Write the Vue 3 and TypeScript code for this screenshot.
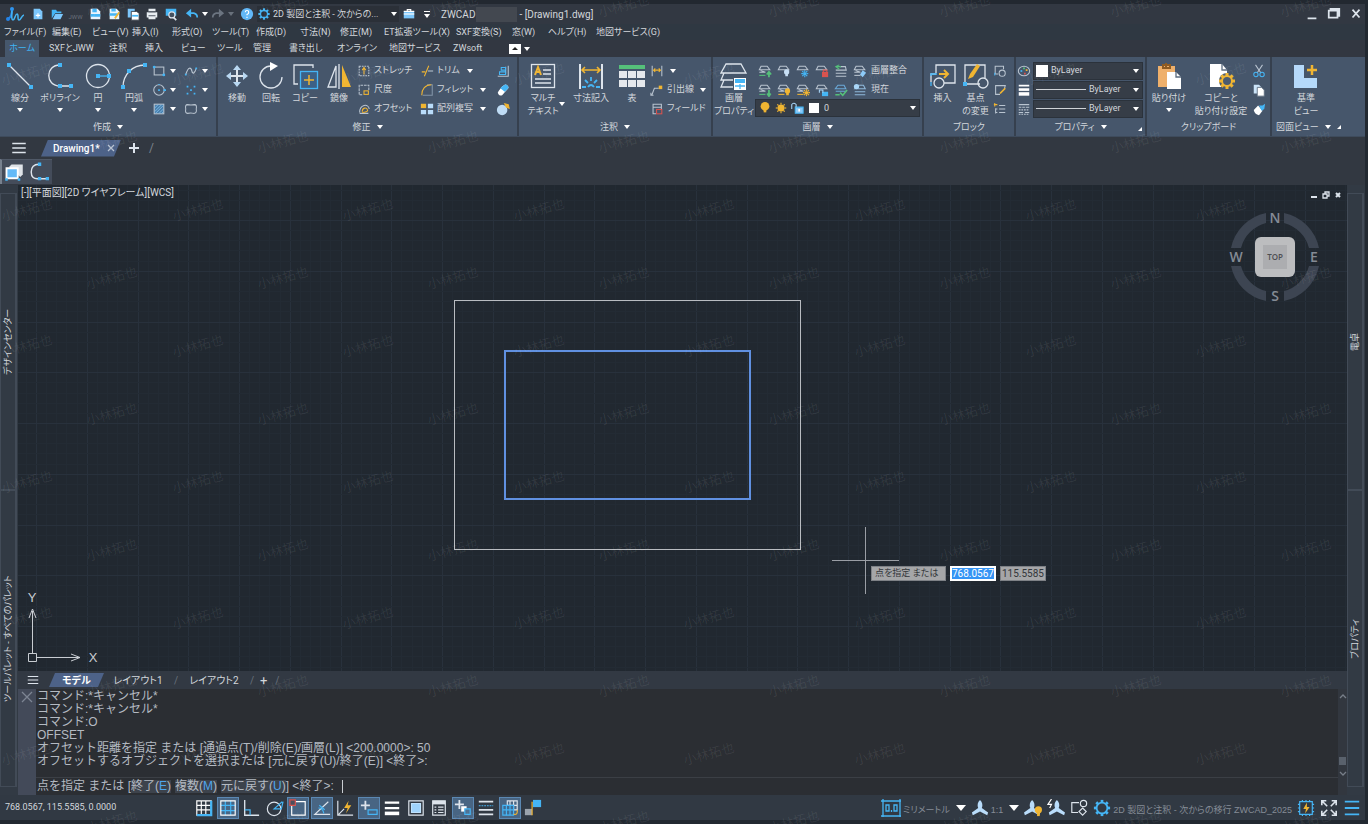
<script setup lang="ts">
interface Tool { icon: string; label: string; w: number; caret?: boolean; side?: boolean }
interface Mini { icon: string; label: string; text?: boolean; caret?: boolean }

const W = '#dde4ec'
const B = '#45b5f5'
const Y = '#f0b532'
const G = '#55c07a'
const R = '#d9534f'

const dot = (x: number, y: number) => `<rect x="${x - 2}" y="${y - 2}" width="4" height="4" fill="${B}" stroke="none"/>`
const roof = '<path d="M3.5 2.5h7l3 4h-12z"/>'
const layer = (accent = '#b9c4d0') => `${roof}<path d="M1.5 9.5h7l-5.500-2"/><path d="M1.5 13h7" stroke="${accent}"/>`
const bulb = (x: number, y: number, c: string, r = 3) => `<circle cx="${x}" cy="${y}" r="${r}" fill="${c}" stroke="none"/><path d="M${x} ${y}v${r + 2}" stroke="${c}" stroke-width="3"/>`
const sun = (x: number, y: number, c: string, r = 3) => {
  let rays = ''
  for (let a = 0; a < 360; a += 45) rays += `<path d="M0 ${-r}v-2" transform="translate(${x} ${y}) rotate(${a})" stroke="${c}" stroke-width="1.3"/>`
  return `<circle cx="${x}" cy="${y}" r="${r}" fill="${c}" stroke="none"/>${rays}`
}
const gear = (x: number, y: number, r: number, c: string, sw: number) => {
  let teeth = ''
  for (let a = 0; a < 360; a += 45) teeth += `<path d="M0 ${-r}v${-sw - 1}" transform="translate(${x} ${y}) rotate(${a})" stroke="${c}" stroke-width="${sw + 1}"/>`
  return `<circle cx="${x}" cy="${y}" r="${r}" stroke="${c}" stroke-width="${sw}"/>${teeth}`
}

const icons: Record<string, string> = {
  line: `<path d="M3 3l22 22"/>${dot(3, 3)}${dot(25, 25)}`,
  poly: `<path d="M14 3C-1 3-1 24 14 24h11"/>${dot(14, 3)}${dot(14, 24)}${dot(25, 24)}`,
  circle: `<circle cx="14" cy="14" r="11.5"/><path d="M14 14h11" stroke="${B}"/>${dot(14, 14)}${dot(25, 14)}`,
  arc: `<path d="M3 25C3 13 12 3 25 3"/>${dot(3, 25)}${dot(9, 9)}${dot(25, 3)}`,
  rect: `<rect x="2.5" y="3.5" width="11" height="9"/><circle cx="2.5" cy="3.5" r="1" fill="${B}" stroke="${B}"/><circle cx="13.5" cy="12.5" r="1" fill="${B}" stroke="${B}"/>`,
  ellipse: `<circle cx="8" cy="8" r="6"/><path d="M7 8h2M13 8h3M8 1v1" stroke="${B}" stroke-width="2"/>`,
  hatch: `<rect x="2.5" y="2.5" width="11" height="11" fill="#4a80ad"/><path d="M3 7l4-4M3 11l8-8M4 13l9-9M8 13l5-5M11 13l2-2" stroke="#7fb9e6" stroke-width="1"/>`,
  spline: `<path d="M2 12C5 2 8 4 9 8s3 3 5-3"/><path d="M1 12h2M13 5h2" stroke="${B}" stroke-width="2"/>`,
  points: `<path d="M3 4h2M11 4h2M7 8h2M3 12h2M11 12h2" stroke="${B}" stroke-width="2"/>`,
  cloud: `<path d="M4 3q4 1 8 0 3 0 2 5 1 5-3 5-3-1-7 0-3 0-2-5-1-5 2-5z"/>`,
  move: `<path d="M14 5v18M5 14h18" stroke-width="2"/><path d="M14 3l-4 5h8zM14 25l-4-5h8zM3 14l5-4v8zM25 14l-5-4v8z" fill="#b9d8f2" stroke="none"/>`,
  rotate: `<path d="M14 4a11 11 0 1 0 11 11"/><path d="M13 0l8 4-8 5z" fill="#fff" stroke="none"/>`,
  copy: `<path d="M22 6V3H3v19h4"/><rect x="9.5" y="9.5" width="17" height="17" stroke="${B}" fill="#3d6186"/><path d="M18 13v10M13 18h10" stroke="${Y}" stroke-width="1.5"/>`,
  mirror: `<path d="M11 4v21H3zM14 2v25"/><path d="M17 3v22h9z" fill="${Y}" stroke="none"/>`,
  stretch: `<rect x="2.5" y="2.5" width="11" height="11" stroke-dasharray="2 1"/><path d="M8 12V5M6 7l2-3 2 3" stroke="${Y}"/>`,
  scale: `<path d="M13.5 8V2.5h-11v11H6" stroke-dasharray="3 1"/><rect x="8" y="9" width="5" height="4" stroke="${Y}"/>`,
  offset: `<path d="M3 13h10M3 12C3 3 13 1 14 8"/><path d="M6 11c0-5 5-5 6-2 1 2-3 3-6 3" stroke="${Y}"/>`,
  trim: `<path d="M9 8h6"/><path d="M2 9h4M5 14l5-12" stroke="${Y}"/>`,
  fillet: `<path d="M3 14h11V2H8" stroke="#8294a8"/><path d="M2 14C2 7 6 2 13 2" stroke="${Y}"/>`,
  array: `<g stroke="none"><path d="M1 2h6v5H1z" fill="${Y}"/><path d="M9 2h6v5H9zM1 9h6v5H1zM9 9h6v5H9z" fill="#b9dcfa"/></g>`,
  align: `<path d="M14 2v12H2M11 3v8"/><path d="M4 9h7v3H4zM6 4h5v3H6z" stroke="${B}"/>`,
  erase: `<path d="M7 4l3-2q2-1 4 2 1 2-1 3l-6 7q-3 1-4-1-2-2 0-4z" fill="#fff" stroke="none"/><path d="M7 4l3-2q2-1 4 2 1 2-1 3l-3 3-5-4z" fill="${B}" stroke="none"/>`,
  explode: `<circle cx="7" cy="9" r="6" fill="#bfdcf5" stroke="none"/><path d="M10 2l4 1 1 4-3-1z" fill="${Y}" stroke="${Y}"/>`,
  mtext: `<rect x="2.5" y="2.5" width="23" height="23"/><path d="M6 13l3-8 3 8M7 10h4" stroke="${Y}" stroke-width="2"/><path d="M14 8h8M14 12h8M6 17h16M6 21h16" stroke-width="1.5"/>`,
  dim: `<path d="M3 2v25M25 2v25" stroke-width="2"/><path d="M5 8h18M8 5L5 8l3 3M20 5l3 3-3 3" stroke="${Y}" stroke-width="1.6"/><path d="M14 15v4M8 18l3 3M20 18l-3 3M5 25h4M23 25h-4M11 25q3-4 6 0" stroke="${B}" stroke-width="1.8"/>`,
  table: `<g stroke="none"><path d="M1 3h26v4H1z" fill="${G}"/><path d="M1 9h8v7H1zM10 9h8v7h-8zM19 9h8v7h-8zM1 18h8v7H1zM10 18h8v7h-8zM19 18h8v7h-8z" fill="#e5e8ec"/></g>`,
  linear: `<path d="M2.5 2v12M13.5 2v12"/><path d="M4 7h8M6 5L4 7l2 2M10 5l2 2-2 2" stroke="${Y}"/>`,
  leader: `<path d="M2 14l3-8h5M1 11v3h3"/><rect x="10" y="3" width="4" height="4" fill="${Y}" stroke="none"/>`,
  field: `<path d="M13 8V2.5H3.5v11H7M3 6h10"/><rect x="7.5" y="8.5" width="6" height="5" stroke="${R}"/>`,
  layers: `<path d="M6 2h15l5 9H1z"/><path d="M4 11l-3 7h12M4 18l-3 7h12"/><rect x="14" y="16" width="12" height="12" fill="#fff" stroke="none"/><path d="M15 17h10v4H15z" fill="${B}" stroke="none"/><path d="M15 24h10M20 22v5" stroke="${B}"/>`,
  l1: layer(G) + `<path d="M12.5 15V9M10 12l2.5-3 2.5 3" stroke="${G}" stroke-width="2"/>`,
  l2: roof + bulb(11, 9, '#c7dff5'),
  l3: roof + sun(10, 11, B, 2),
  l4: roof + `<path d="M8 9h7v6H8z" fill="${R}" stroke="none"/><path d="M9.5 9V7h4v2" stroke="${R}"/>`,
  l5: `<path d="M7 3h6l1 4H2M2 10.5h12M2 14h12"/><path d="M6 1L2 3l4 3M2 3h6" stroke="${G}"/>`,
  l6: layer() + `<path d="M11 7l4 3-4 5-3-3z" fill="#8dcaf7" stroke="none"/>`,
  l7: layer(G) + `<path d="M12.5 8v6M10.5 12l2 3 2-3" stroke="${G}" stroke-width="2"/>`,
  l8: layer(Y) + bulb(12, 9, Y),
  l9: layer(Y) + sun(12, 11, Y, 2),
  l10: roof + `<path d="M8 10h7v5H8z" fill="${B}" stroke="none"/><path d="M5 11V8h4v3" stroke="#a9d6f8"/>`,
  l11: `<path d="M4.5 2.5h7l2 4h-12zM2 9.5h12" stroke="#6ba9d8"/><path d="M1.5 13.5h5M7 11l3 3 5-6" stroke="${G}" stroke-width="1.8"/>`,
  l12: `<path d="M6 2.500h6l2 4H2zM2 10h12M2 13.500h12" stroke="#8fb9dc"/><circle cx="4" cy="4" r="3" fill="#a9d6f8" stroke="none"/>`,
  sunny: sun(8, 8, Y, 4),
  lamp: bulb(8, 6, Y, 5),
  unlock: `<path d="M6 7h9v7H6z" fill="#8dcaf7" stroke="${B}"/><path d="M2 9V4q2-3 5 0v3" stroke="#a9d6f8"/><path d="M10.5 9v3" stroke="#fff" stroke-width="2"/>`,
  insert: `<path d="M7 11V3h19v18H15M2 20v-8h5"/><path d="M2 20v4M2 14v-2h6" stroke="${B}"/><circle cx="10" cy="21" r="5"/><path d="M10 12h9M15 8l4 4-4 4" stroke="${Y}" stroke-width="2"/>`,
  base: `<path d="M18 22H3V3h20v13"/><circle cx="21" cy="21" r="5"/><path d="M6 17l2-5 7-10 3 2-7 11z" fill="${Y}" stroke="none"/>${dot(3, 22)}`,
  b1: `<path d="M12 6V2.5H2.5v9H6"/><circle cx="10.5" cy="10.5" r="3.5"/><path d="M2 13v-3" stroke="${B}"/>`,
  b2: `<path d="M13 7L14 3H3v10h5"/><path d="M8 12l6-6" stroke="${Y}" stroke-width="2"/>`,
  b3: `<path d="M2 1v4M5 3H1" stroke="${Y}"/><path d="M7 4h7M7 8h7M7 12h7M3 7v6M3 8h2M3 12h2"/>`,
  palette: `<ellipse cx="8" cy="8" rx="6.5" ry="5.5"/><path d="M4 8h2" stroke="${B}" stroke-width="2"/><path d="M7 5h2" stroke="${G}" stroke-width="2"/><path d="M10 7h2" stroke="${Y}" stroke-width="2"/><path d="M8 11h2" stroke="${R}" stroke-width="2"/>`,
  weight: `<g stroke="#fff"><path d="M2 3h12" stroke-width="2"/><path d="M2 7.5h12" stroke-width="3"/><path d="M2 12.5h12" stroke-width="4"/></g>`,
  ltype: `<path d="M2 3h12M2 6h3M6 6h3M10 6h4M2 9h2M5 9h2M8 9h2M11 9h2M2 12h5M9 12h5M2 14h2M5 14h2M8 14h2M11 14h2"/>`,
  paste: `<path d="M3 4h17v21H3z" fill="#efb06b" stroke="none"/><path d="M8 3h7v3H8zM11 1v4" stroke="#8d5b23" stroke-width="2"/><path d="M12 10h9l5 5v12H12z" fill="#fff" stroke="none"/><path d="M21 10v5h5" stroke="#5b6b7e"/>`,
  pasteset: `<path d="M3 2h12l5 6v17H3z" fill="#fff" stroke="none"/><path d="M15 2v6h5" stroke="#5b6b7e"/><circle cx="20" cy="19" r="8" fill="#4b5b70" stroke="none"/>${gear(20, 19, 5, Y, 2)}`,
  cut: `<path d="M4 1l6 9M12 1L6 10"/><circle cx="4.500" cy="12" r="2.500" stroke="${B}"/><circle cx="11.500" cy="12" r="2.500" stroke="${B}"/>`,
  clip: `<path d="M2 2h6l3 3v7H2z" fill="#cbe3f8" stroke="none"/><path d="M6 5h5l3 3v7H6z" fill="#fff" stroke="#5b6b7e" stroke-width="1"/>`,
  brush: `<path d="M2 9l5-5 5 6-4 5q-5-1-6-6z" fill="#fff" stroke="none"/><path d="M8 4h4l3-2-1 6-3 2z" fill="${B}" stroke="none"/>`,
  view: `<path d="M2 3h10v13h13v10H2z" fill="#b5d9fa" stroke="none"/><path d="M20 3v10M15 8h10" stroke="${Y}" stroke-width="2.5"/>`,
  logo: `<path d="M2 13Q6 11 6 3" stroke="#2484e8" stroke-width="2"/><path d="M6 3c0 5-1 11 1 11s2-6 4-6 0 6 2 6 2-4 5-5" stroke="${B}" stroke-width="1.500"/><circle cx="6" cy="3" r="2" fill="#2f95f0" stroke="none"/><circle cx="2" cy="13" r="2" fill="#2484e8" stroke="none"/>`,
  fnew: `<path d="M3 2h7l3 3v9H3z" fill="#7cc6fb" stroke="none"/><path d="M8 7v5M5.5 9.5h5" stroke="#fff"/>`,
  open: `<path d="M2 13V3h5l1 2h5v2H6z" fill="${B}" stroke="none"/><path d="M6 8h9l-3 6H3z" fill="#7cc6fb" stroke="none"/>`,
  save: `<path d="M3 2h8l3 3v9H3z" fill="#eaf4fd" stroke="none"/><path d="M5 2h5v4H5zM3 8h11v3H3z" fill="${B}" stroke="none"/>`,
  saveas: `<path d="M3 2h8l3 3v9H3z" fill="#eaf4fd" stroke="none"/><path d="M5 2h5v3H5zM3 7h9v3H3z" fill="${B}" stroke="none"/><path d="M9 13l5-7" stroke="${Y}" stroke-width="2"/>`,
  saveall: `<path d="M2 2h8v10H2z" fill="#7cc6fb" stroke="none"/><path d="M6 5h6l3 2v8H6z" fill="#fff" stroke="#323842" stroke-width="1"/><path d="M7 9h7v2H7z" fill="${B}" stroke="none"/>`,
  print: `<path d="M4 2h8v3H4zM2 6h12v6H2zM4 10h8v4H4z" fill="#e8edf2" stroke="none"/><path d="M4 10h8M4 5.5h8" stroke="#3b4450" stroke-width="1"/>`,
  preview: `<path d="M2 2h12v8H2z" fill="${B}" stroke="none"/><circle cx="9" cy="9" r="3.5" fill="#43505f"/><path d="M11 12l3 3" stroke-width="2"/>`,
  undo: `<path d="M3 7h7q4 1 4 5" stroke="${B}" stroke-width="2"/><path d="M7 2L1 7l6 5z" fill="${B}" stroke="none"/>`,
  redo: `<path d="M13 7H6q-4 1-4 5" stroke="#6b7480" stroke-width="2"/><path d="M9 2l6 5-6 5z" fill="#6b7480" stroke="none"/>`,
  help: `<circle cx="8" cy="8" r="7" fill="#62b8f8" stroke="none"/><path d="M6 6q0-2 2-2t2 2-2 2.500v1M8 11v1.500" stroke="#fff"/>`,
  gear: gear(8, 8, 4, B, 1.5),
  box: `<path d="M2 5h12v8H2z" fill="#7cc6fb" stroke="none"/><path d="M6 5V3h4v2M2 5h12" stroke="#fff"/><path d="M2 8h12" stroke="#fff"/>`,
  burger: `<path d="M2 4h12M2 8h12M2 12h12"/>`,
  lines3: `<path d="M2 3h16M2 10h16M2 17h16" stroke="${B}" stroke-width="2"/>`,
  rect3d: `<path d="M4 4l2-2h9v8l-2 2z" fill="#dfe3e8" stroke="none"/><path d="M2 5h9v8H2z" fill="#64baf8" stroke="#fff" stroke-width="1.5"/><path d="M1 14h2M11 14h2" stroke="${B}" stroke-width="2"/>`,
  mpoly: `<path d="M9 2Q2 2 2 9t7 6h7"/><path d="M8 2h3M8 15h3M15 15h3" stroke="${B}" stroke-width="3"/>`,
  s1: `<path d="M2 2h16v16H2zM2 7h16M2 12h16M7 2v16M12 2v16" stroke="#fff"/><path d="M18 2v16H2" stroke="${B}" stroke-width="2.5"/>`,
  s2: `<path d="M2 7h16M2 13h16M7 2v16M13 2v16" stroke="${B}"/><path d="M2 2h16v16H2z" stroke="#fff"/>`,
  s3: `<path d="M3 1v17h16" stroke-width="1.5"/><path d="M3 12h6v6" stroke="${B}"/>`,
  s4: `<circle cx="9" cy="11" r="7.5"/><path d="M18 3l-9 8h8l2-8" stroke="${B}"/>`,
  s5: `<path d="M7 3h11v15H3V7" stroke="#fff"/><path d="M1 1h6v6H1z" fill="#4b4e5d" stroke="${R}"/>`,
  s6: `<path d="M17 3L2 17h17"/><path d="M6 10q5 0 6 6M7 7l6 5" stroke="${B}"/>`,
  s7: `<path d="M2 2v16h17M3 17l6-6"/><path d="M14 2l-5 8h4l-2 6 6-9h-4z" fill="${Y}" stroke="none"/>`,
  s8: `<path d="M6 2v10M1 7h10" stroke-width="2"/><path d="M9 12h10v5H9z" stroke="${B}"/>`,
  s9: `<path d="M2 4h16M2 10h16" stroke="#fff" stroke-width="2.5"/><path d="M2 16h16" stroke="#fff" stroke-width="4"/>`,
  s10: `<path d="M2 2h16v16H2z"/><path d="M5 5h10v10H5z" fill="#9fd3fb" stroke="#bfe2fd"/>`,
  s11: `<path d="M3 2h14v16H3z"/><path d="M3 4h14" stroke-width="4"/><path d="M5 9h2M5 12h2M5 15h2M9 9h6M9 12h6M9 15h6"/>`,
  s12: `<path d="M6 1v10M1 6h10" stroke-width="2"/><path d="M8 8h6v6H8z" fill="#fff" stroke="none"/><path d="M12 11h6v6h-6z" fill="#4f7294" stroke="${B}"/>`,
  s13: `<path d="M2 3h16M2 12h16M2 17h16" stroke-width="2"/><path d="M2 7.5h16" stroke="${B}" stroke-dasharray="2 1"/>`,
  s14: `<path d="M7 2h11v10H7zM10 2v10M14 2v10M7 7h11"/><path d="M2 7h12v11H2z" fill="#3e6b93" stroke="${B}"/><path d="M6 7v11M10 7v11M2 12h12" stroke="${B}"/><path d="M14 17q5 1 4-5" stroke="${Y}"/>`,
  s15: `<path d="M10 1h9v8h-9z" fill="${B}" stroke="none"/><path d="M1 11h8v7H1z" fill="#9ba3ac" stroke="none"/><path d="M9 18V3" stroke="${Y}"/>`,
  unit: `<path d="M2 3h17v15H2zM2 1v18M0 3h20M19 1v18M0 18h20" stroke="${B}"/><path d="M5 7h3v6H5zM13 7h3v6h-3z" stroke="${B}"/><path d="M10.500 12v2" stroke="${B}"/>`,
  scaleA: `<path d="M10 1q4 4 2 9l7 5-1 3-8-4-8 4-1-3 7-5Q6 5 10 1z" fill="#b9dcfa" stroke="none"/>`,
  scaleB: `<path d="M9 1q4 4 2 9l7 5-1 3-8-4-8 4-1-3 7-5Q5 5 9 1z" fill="#b9dcfa" stroke="none"/><circle cx="16" cy="12" r="4" fill="${Y}" stroke="none"/><path d="M16 14v5" stroke="${Y}" stroke-width="3"/>`,
  scaleC: `<path d="M11 1q4 4 2 9l7 5-1 3-8-4-8 4-1-3 7-5Q7 5 11 1z" fill="#b9dcfa" stroke="none"/><path d="M5 0L1 6h4L3 10" stroke="#fff"/>`,
  shapes: `<path d="M10 4H2v11h7"/><circle cx="15" cy="5" r="3.5"/><path d="M14 10l4 4-4 4-4-4z"/>`,
  gearL: gear(10, 10, 6, B, 2),
  chip: `<path d="M3 3h14v14H3zM6 1v2M10 1v2M14 1v2M6 17v2M10 17v2M14 17v2M1 6h2M1 10h2M1 14h2M17 6h2M17 10h2M17 14h2" stroke="${B}"/><path d="M11 4l-4 7h3l-1 5 5-7h-3z" fill="${Y}" stroke="none"/>`,
  expand: `<path d="M2 7V2h5M13 2h5v5M18 13v5h-5M7 18H2v-5M2 2l6 6M18 2l-6 6M18 18l-6-6M2 18l6-6" stroke="${W}" stroke-width="1.8"/>`,
}

const quick = [
  ['fnew', '新規'], ['open', '開く'], ['jww', 'JWW'], ['save', '保存'], ['saveas', '名前を付けて保存'],
  ['saveall', 'すべて保存'], ['print', '印刷'], ['preview', 'プレビュー'],
]
const menus: [string, number][] = [
  ['ファイル(F)', 48], ['編集(E)', 40], ['ビュー(V)', 40], ['挿入(I)', 40], ['形式(O)', 40], ['ツール(T)', 44], ['作成(D)', 44],
  ['寸法(N)', 40], ['修正(M)', 44], ['ET拡張ツール(X)', 72], ['SXF変換(S)', 56], ['窓(W)', 36], ['ヘルプ(H)', 48], ['地図サービス(G)', 72],
]
const tabs: [string, number][] = [
  ['SXFとJWW', 60], ['注釈', 36], ['挿入', 36], ['ビュー', 36], ['ツール', 36], ['管理', 36], ['書き出し', 48],
  ['オンライン', 52], ['地図サービス', 64], ['ZWsoft', 56],
]
const create: Tool[] = [
  { icon: 'line', label: '線分', w: 40, caret: true }, { icon: 'poly', label: 'ポリライン', w: 40, caret: true },
  { icon: 'circle', label: '円', w: 36, caret: true }, { icon: 'arc', label: '円弧', w: 36, caret: true },
]
const modify: Tool[] = [
  { icon: 'move', label: '移動', w: 34 }, { icon: 'rotate', label: '回転', w: 34 }, { icon: 'copy', label: 'コピー', w: 34 }, { icon: 'mirror', label: '鏡像', w: 34 },
]
const annotate: Tool[] = [
  { icon: 'mtext', label: 'マルチ\nテキスト', w: 48, side: true }, { icon: 'dim', label: '寸法記入', w: 48 }, { icon: 'table', label: '表', w: 34 },
]
const createCols: Mini[][] = [
  [{ icon: 'rect', label: '長方形', caret: true }, { icon: 'ellipse', label: '楕円', caret: true }, { icon: 'hatch', label: 'ハッチング', caret: true }],
  [{ icon: 'spline', label: 'スプライン', caret: true }, { icon: 'points', label: '点', caret: true }, { icon: 'cloud', label: '雲マーク', caret: true }],
]
const modCols: Mini[][] = [
  [{ icon: 'stretch', label: 'ストレッチ', text: true }, { icon: 'scale', label: '尺度', text: true }, { icon: 'offset', label: 'オフセット', text: true }],
  [{ icon: 'trim', label: 'トリム', text: true, caret: true }, { icon: 'fillet', label: 'フィレット', text: true, caret: true }, { icon: 'array', label: '配列複写', text: true, caret: true }],
  [{ icon: 'align', label: '位置合わせ' }, { icon: 'erase', label: '削除' }, { icon: 'explode', label: '分解' }],
]
const noteCol: Mini[] = [
  { icon: 'linear', label: '長さ寸法', caret: true }, { icon: 'leader', label: '引出線', text: true, caret: true }, { icon: 'field', label: 'フィールド', text: true },
]
const layerRows = [['l1', 'l2', 'l3', 'l4', 'l5', 'l6'], ['l7', 'l8', 'l9', 'l10', 'l11', 'l12']]
const layerText = ['画層整合', '現在']
const propRows: [string, string][] = [['palette', '色'], ['weight', '線の太さ'], ['ltype', '線種']]
const log = [
  'コマンド:*キャンセル*', 'コマンド:*キャンセル*', 'コマンド:O', 'OFFSET',
  'オフセット距離を指定 または [通過点(T)/削除(E)/画層(L)] <200.0000>: 50',
  'オフセットするオブジェクトを選択または [元に戻す(U)/終了(E)] <終了>:',
]
const choices: [string, string][] = [['終了', 'E'], ['複数', 'M'], ['元に戻す', 'U']]
const status = Array.from({ length: 15 }, (_, i) => 's' + (i + 1))
const statusNames = ['グリッド', 'スナップ', '直交', '極', 'オブジェクトスナップ', 'トラック', '動的UCS', '動的入力', '線の太さ', '透過', 'プロパティ', '選択', '線種', '循環', '注釈モニタ']
const active = new Set([1, 4, 5, 7, 11, 13])

const pitch = 50.75
const gridLines = (origin: number, count: number) =>
  Array.from({ length: count }, (_, i) => ({ p: Math.round(origin + ((i - 5) * pitch) / 5) + 0.5, major: i % 5 === 0 }))
const grid = { x: gridLines(18, 260), y: gridLines(35, 160) }

const marks: { x: number; y: number }[] = []
for (let r = 0; r < 13; r++) {
  for (let c = 0; c < 8; c++) marks.push({ x: Math.round((r % 2 ? 3 : 88) + c * 170.6), y: 17 + r * 68 })
}
</script>

<template>
  <div class="app">
    <div class="strip"></div>
    <header class="title">
      <svg class="i18 logo" viewBox="0 0 18 16" v-html="icons.logo"></svg>
      <div class="quick">
        <button v-for="q in quick" :key="q[0]" :aria-label="q[1]">
          <span v-if="q[0] === 'jww'" class="jww">JWW</span>
          <svg v-else class="i14" viewBox="0 0 16 16" v-html="icons[q[0]]"></svg>
        </button>
      </div>
      <button class="hist" aria-label="元に戻す"><svg class="i14" viewBox="0 0 16 16" v-html="icons.undo"></svg><i class="car"></i></button>
      <button class="hist" aria-label="やり直し"><svg class="i14" viewBox="0 0 16 16" v-html="icons.redo"></svg><i class="car dim"></i></button>
      <button class="help" aria-label="ヘルプ"><svg class="i14" viewBox="0 0 16 16" v-html="icons.help"></svg></button>
      <label class="space">
        <svg class="i14" viewBox="0 0 16 16" v-html="icons.gear"></svg>
        <select aria-label="ワークスペース"><option>2D 製図と注釈 - 次からの...</option></select><i class="car"></i>
      </label>
      <button class="help" aria-label="ツールボックス"><svg class="i14" viewBox="0 0 16 16" v-html="icons.box"></svg></button>
      <button class="more" aria-label="カスタマイズ"><i class="over"></i><i class="car"></i></button>
      <span class="name">ZWCAD</span><span class="patch"></span><span>- [Drawing1.dwg]</span>
      <div class="win">
        <button aria-label="最小化"><svg class="i14" viewBox="0 0 16 16"><path d="M3 13h10" stroke-width="2" /></svg></button>
        <button aria-label="元のサイズ"><svg class="i14" viewBox="0 0 16 16"><path d="M2 4h10v8H2zM4 4V2h10v8h-2" stroke-width="2" /></svg></button>
        <button aria-label="閉じる"><svg class="i14" viewBox="0 0 16 16"><path d="M4 3l8 9M12 3l-8 9" stroke-width="2" /></svg></button>
      </div>
    </header>

    <nav class="menu"><button v-for="m in menus" :key="m[0]" :style="{ width: m[1] + 'px' }">{{ m[0] }}</button></nav>

    <nav class="tabs">
      <button class="home">ホーム</button>
      <button v-for="t in tabs" :key="t[0]" class="tab" :style="{ width: t[1] + 'px' }">{{ t[0] }}</button>
      <button class="fold" aria-label="リボンを最小化"><i></i></button><i class="car"></i>
    </nav>

    <section class="ribbon">
      <div class="panel w-create">
        <div class="body">
          <button v-for="t in create" :key="t.icon" class="big" :style="{ width: t.w + 'px' }">
            <svg class="i28" viewBox="0 0 28 28" v-html="icons[t.icon]"></svg><span>{{ t.label }}</span><i class="car"></i>
          </button>
          <div v-for="(c, n) in createCols" :key="n" class="col narrow">
            <button v-for="m in c" :key="m.icon" :aria-label="m.label"><svg class="i14" viewBox="0 0 16 16" v-html="icons[m.icon]"></svg><i class="car"></i></button>
          </div>
        </div>
        <button class="cap">作成 <i class="car"></i></button>
      </div>
      <div class="panel w-modify">
        <div class="body">
          <button v-for="t in modify" :key="t.icon" class="big" :style="{ width: t.w + 'px' }">
            <svg class="i28" viewBox="0 0 28 28" v-html="icons[t.icon]"></svg><span>{{ t.label }}</span>
          </button>
          <div v-for="(c, n) in modCols" :key="n" class="col" :class="'mod' + n">
            <button v-for="m in c" :key="m.icon" :aria-label="m.label"><svg class="i14" viewBox="0 0 16 16" v-html="icons[m.icon]"></svg><span v-if="m.text">{{ m.label }}</span><i v-if="m.caret" class="car"></i></button>
          </div>
        </div>
        <button class="cap">修正 <i class="car"></i></button>
      </div>
      <div class="panel w-note">
        <div class="body">
          <button v-for="t in annotate" :key="t.icon" class="big" :style="{ width: t.w + 'px' }">
            <svg class="i28" viewBox="0 0 28 28" v-html="icons[t.icon]"></svg><span>{{ t.label }}</span><i v-if="t.side" class="car side"></i>
          </button>
          <div class="col note">
            <button v-for="m in noteCol" :key="m.icon" :aria-label="m.label"><svg class="i14" viewBox="0 0 16 16" v-html="icons[m.icon]"></svg><span v-if="m.text">{{ m.label }}</span><i v-if="m.caret" class="car"></i></button>
          </div>
        </div>
        <button class="cap">注釈 <i class="car"></i></button>
      </div>
      <div class="panel w-layer">
        <div class="body">
          <button class="big lay"><svg class="i28" viewBox="0 0 28 28" v-html="icons.layers"></svg><span>{{ '画層\nプロパティ' }}</span></button>
          <div class="col laycol">
            <div v-for="(r, n) in layerRows" :key="n" class="row">
              <button v-for="k in r" :key="k" :aria-label="'画層ツール ' + k.slice(1)"><svg class="i14" viewBox="0 0 16 16" v-html="icons[k]"></svg></button><span>{{ layerText[n] }}</span>
            </div>
            <label class="combo">
              <svg class="i14" viewBox="0 0 16 16" v-html="icons.lamp"></svg><svg class="i14" viewBox="0 0 16 16" v-html="icons.sunny"></svg>
              <svg class="i14" viewBox="0 0 16 16" v-html="icons.unlock"></svg><i class="swatch small"></i>
              <select aria-label="画層"><option>0</option></select><i class="car"></i>
            </label>
          </div>
        </div>
        <button class="cap">画層 <i class="car"></i></button>
      </div>
      <div class="panel w-block">
        <div class="body">
          <button class="big blk"><svg class="i28" viewBox="0 0 28 28" v-html="icons.insert"></svg><span>挿入</span></button>
          <button class="big blk"><svg class="i28" viewBox="0 0 28 28" v-html="icons.base"></svg><span>{{ '基点\nの変更' }}</span></button>
          <div class="col"><button v-for="k in ['b1', 'b2', 'b3']" :key="k" :aria-label="'ブロック ' + k"><svg class="i14" viewBox="0 0 16 16" v-html="icons[k]"></svg></button></div>
        </div>
        <button class="cap">ブロック</button>
      </div>
      <div class="panel w-prop">
        <div class="body props">
          <div v-for="(p, n) in propRows" :key="p[0]" class="prow">
            <svg class="i14" viewBox="0 0 16 16" v-html="icons[p[0]]"></svg>
            <label class="combo"><i v-if="n === 0" class="swatch"></i><i v-else class="rule"></i>
              <select :aria-label="p[1]"><option>ByLayer</option></select><i class="car"></i></label>
          </div>
        </div>
        <button class="cap">プロパティ <i class="car"></i><i class="launch"></i></button>
      </div>
      <div class="panel w-clip">
        <div class="body">
          <button class="big paste"><svg class="i28" viewBox="0 0 28 28" v-html="icons.paste"></svg><span>貼り付け</span><i class="car"></i></button>
          <button class="big pset"><svg class="i28" viewBox="0 0 28 28" v-html="icons.pasteset"></svg><span>{{ 'コピーと\n貼り付け設定' }}</span></button>
          <div class="col"><button v-for="k in ['cut', 'clip', 'brush']" :key="k" :aria-label="k"><svg class="i14" viewBox="0 0 16 16" v-html="icons[k]"></svg></button></div>
        </div>
        <button class="cap">クリップボード</button>
      </div>
      <div class="panel w-view">
        <div class="body">
          <button class="big vw"><svg class="i28" viewBox="0 0 28 28" v-html="icons.view"></svg><span>{{ '基準\nビュー' }}</span></button>
        </div>
        <button class="cap left">図面ビュー <i class="car"></i><i class="tri"></i></button>
      </div>
    </section>

    <div class="docs">
      <button class="brg" aria-label="図面一覧"><svg class="i18" viewBox="0 0 16 16" v-html="icons.burger"></svg></button>
      <div class="doc"><b>Drawing1*</b><button aria-label="図面を閉じる"><svg class="i8" viewBox="0 0 8 8"><path d="M1 1l6 6M7 1L1 7" /></svg></button></div>
      <button class="plus" aria-label="新しい図面"><svg class="i12" viewBox="0 0 12 12"><path d="M6 1v10M1 6h10" stroke-width="2" /></svg></button><span class="slash">/</span>
    </div>
    <div class="mini">
      <div class="minibox">
        <button aria-label="長方形"><svg class="i20" viewBox="0 0 16 16" v-html="icons.rect3d"></svg></button>
        <button aria-label="ポリライン"><svg class="i20" viewBox="0 0 18 18" v-html="icons.mpoly"></svg></button>
      </div>
    </div>

    <main class="work">
      <aside class="dock ldock"><button>デザインセンター</button><button>ツールパレット - すべてのパレット</button></aside>
      <div class="center">
        <div class="canvas">
          <svg class="sheet">
            <path v-for="g in grid.x" :key="'x' + g.p" :d="`M${g.p} 0v2000`" :class="g.major ? 'major' : 'minor'" />
            <path v-for="g in grid.y" :key="'y' + g.p" :d="`M0 ${g.p}h3000`" :class="g.major ? 'major' : 'minor'" />
            <g transform="translate(-18 -185)">
              <rect x="454.5" y="300.5" width="346" height="249" class="outer" />
              <rect x="505" y="351" width="245" height="148" class="inner" />
              <path d="M832 560.5h67M865.5 527v67" class="cross" />
            </g>
          </svg>
          <div class="vlabel">[-][平面図][2D ワイヤフレーム][WCS]</div>
          <div class="vwin">
            <button aria-label="ビューを最小化"><svg class="i8" viewBox="0 0 8 8"><path d="M1 6h6" stroke-width="2" /></svg></button>
            <button aria-label="ビューを戻す"><svg class="i8" viewBox="0 0 8 8"><path d="M1 3h4v4H1zM3 3V1h4v4H5" /></svg></button>
            <button aria-label="ビューを閉じる"><svg class="i8" viewBox="0 0 8 8"><path d="M2 2l4 4M6 2L2 6" stroke-width="2" /></svg></button>
          </div>
          <svg class="compass" viewBox="-50 -50 100 100">
            <path v-for="a in [0, 90, 180, 270]" :key="a" :transform="`rotate(${a})`" d="M9 -44A45 45 0 0 1 44 -9L34 -9A35 35 0 0 0 9 -34Z" class="ring" />
            <text x="0" y="-34">N</text><text x="39" y="5">E</text><text x="0" y="44">S</text><text x="-39" y="5">W</text>
            <rect x="-20" y="-20" width="40" height="40" rx="6" fill="#bcbdbf" /><rect x="-12" y="-12" width="24" height="24" fill="#acadb0" />
            <text x="0" y="3" class="top">TOP</text>
          </svg>
          <svg class="ucs" viewBox="0 0 80 80">
            <path d="M1.5 62.5h8v8h-8zM5.5 62V20M2 27l3.5-9 3.5 9M10 66.5h43M44 63l9 3.5-9 3.5" />
            <text x="5" y="11">Y</text><text x="66" y="71">X</text>
          </svg>
          <div class="dyn"><span>点を指定 または</span><input class="on" aria-label="X 座標" value="768.0567" /><input aria-label="Y 座標" value="115.5585" /></div>
        </div>
        <nav class="layouts">
          <button class="brg2" aria-label="レイアウト一覧"><svg class="i14" viewBox="0 0 16 16" v-html="icons.burger"></svg></button>
          <button class="model">モデル</button>
          <button class="lt">レイアウト1</button><span class="sl">/</span>
          <button class="lt">レイアウト2</button><span class="sl">/</span>
          <button class="ad" aria-label="レイアウトを追加">+</button><span class="sl">/</span>
        </nav>
        <section class="cmd">
          <div class="grip"><button aria-label="コマンドを閉じる"><svg class="i12" viewBox="0 0 12 12"><path d="M1 1l10 10M11 1L1 11" /></svg></button></div>
          <div class="cbody">
            <div class="lines"><p v-for="(l, n) in log" :key="n">{{ l }}</p></div>
            <div class="prompt"><label for="cmdline">点を指定 または [</label><button v-for="c in choices" :key="c[1]">{{ c[0] }}(<em>{{ c[1] }}</em>)</button><span>] &lt;終了&gt;:</span><input id="cmdline" /></div>
          </div>
          <div class="scroll"><svg class="i8" viewBox="0 0 8 8"><path d="M1 5l3-3 3 3" /></svg><i></i><svg class="i8" viewBox="0 0 8 8"><path d="M1 3l3 3 3-3" /></svg></div>
        </section>
      </div>
      <aside class="dock rdock"><button>電卓</button><button>プロパティ</button></aside>
    </main>

    <footer class="status">
      <span class="coord">768.0567, 115.5585, 0.0000</span>
      <div class="toggles">
        <button v-for="(s, n) in status" :key="s" :aria-label="statusNames[n]" :class="{ act: active.has(n) }"><svg class="i18" viewBox="0 0 20 20" v-html="icons[s]"></svg></button>
      </div>
      <div class="sright">
        <button class="unit"><svg class="i20" viewBox="0 0 20 20" v-html="icons.unit"></svg><span>ミリメートル</span><i class="car lg"></i></button>
        <button class="ratio"><svg class="i18" viewBox="0 0 20 20" v-html="icons.scaleA"></svg><span>1:1</span><i class="car lg"></i></button>
        <button aria-label="注釈表示"><svg class="i18" viewBox="0 0 20 20" v-html="icons.scaleB"></svg></button>
        <button aria-label="自動尺度"><svg class="i18" viewBox="0 0 20 20" v-html="icons.scaleC"></svg></button>
        <button aria-label="選択表示"><svg class="i18" viewBox="0 0 20 20" v-html="icons.shapes"></svg></button>
        <button class="wsp"><svg class="i18" viewBox="0 0 20 20" v-html="icons.gearL"></svg><span>2D 製図と注釈 - 次からの移行 ZWCAD_2025</span></button>
        <button aria-label="ハードウェア"><svg class="i18" viewBox="0 0 20 20" v-html="icons.chip"></svg></button>
        <button aria-label="全画面"><svg class="i18" viewBox="0 0 20 20" v-html="icons.expand"></svg></button>
        <button aria-label="メニュー"><svg class="i18" viewBox="0 0 20 20" v-html="icons.lines3"></svg></button>
      </div>
    </footer>
    <svg class="marks" aria-hidden="true"><text v-for="(m, n) in marks" :key="n" :transform="`translate(${m.x} ${m.y}) rotate(-15)`">小林拓也</text></svg>
  </div>
</template>

<style>
html, body { margin: 0; background: #1f252d; }
</style>

<style scoped>
.app { position: relative; box-sizing: border-box; min-height: 100vh; padding: 0 3px 4px 0; display: flex; flex-direction: column; overflow: hidden; background: #222931; color: #d3d7dc; font: 9px/13px Roboto, "Noto Sans CJK JP", sans-serif; font-feature-settings: "palt"; }
button { padding: 0; border: 0; background: none; color: inherit; font: inherit; font-feature-settings: inherit; white-space: nowrap; }
select, input { padding: 0; border: 0; background: none; color: inherit; font: inherit; font-feature-settings: inherit; appearance: none; outline: 0; border-radius: 0; }
svg { fill: none; stroke: #dde4ec; stroke-width: 1.3; flex: none; display: block; }
.i8 { width: 8px; height: 8px; }
.i12 { width: 12px; height: 12px; }
.i14 { width: 14px; height: 14px; }
.i18 { width: 18px; height: 18px; }
.i20 { width: 20px; height: 20px; }
.i28 { width: 28px; height: 28px; }
.car { flex: none; display: inline-block; width: 0; border: 3px solid transparent; border-top: 4px solid #fff; border-bottom: 0; }
.car.dim { border-top-color: #69717c; }
.car.lg { border-width: 5px; border-top-width: 6px; border-bottom: 0; }
.strip { height: 4px; background: #222830; }
.title { height: 20px; display: flex; align-items: center; background: #323842; white-space: nowrap; font-size: 10px; }
.logo { margin: 0 4px 0 6px; }
.quick { display: flex; width: 155px; }
.quick button { width: 19px; display: grid; place-items: center; }
.jww { font-size: 6px; color: #69717c; line-height: 6px; padding-top: 6px; }
.hist { width: 26px; display: flex; align-items: center; gap: 3px; }
.hist:first-of-type { margin-left: 2px; }
.help { width: 20px; display: grid; place-items: center; }
.space { width: 142px; height: 16px; display: flex; align-items: center; gap: 2px; background: #2b3038; padding: 0 2px 0 0; box-sizing: border-box; font-size: 9px; }
.space select { flex: 1; min-width: 0; }
.more { width: 12px; margin-left: 2px; display: grid; justify-items: center; gap: 2px; }
.over { width: 6px; height: 1px; background: #fff; }
.name { margin-left: 8px; }
.patch { width: 41px; height: 15px; margin: 0 2px 0 1px; background: #434850; }
.win { margin-left: auto; display: flex; gap: 8px; padding-right: 2px; }
.menu { height: 16px; display: flex; align-items: center; padding-left: 4px; background: #2f3842; }
.menu button, .tab { text-align: left; }
.tabs { height: 17px; display: flex; align-items: center; background: #323741; }
.home { width: 34px; height: 17px; margin: 0 10px 0 5px; background: #46576c; color: #3fb4f5; }
.fold { width: 12px; height: 10px; background: #fff; display: grid; place-items: center; margin-right: 3px; }
.fold i { width: 0; border: 3px solid transparent; border-bottom: 3px solid #222; border-top: 0; }
.ribbon { display: flex; height: 80px; background: #46566b; border-bottom: 1px solid #3e4b5c; box-sizing: border-box; }
.ribbon .i14 { stroke: #b9c4d0; stroke-width: 1.2; }
.panel { box-sizing: border-box; flex: none; display: flex; flex-direction: column; border-right: 2px solid #36404e; padding-top: 4px; }
.body { display: flex; height: 58px; }
.w-create { width: 218px; }
.w-modify { width: 301px; }
.w-note { width: 194px; }
.w-layer { width: 211px; }
.w-block { width: 92px; }
.w-prop { width: 131px; }
.w-clip { width: 125px; }
.w-view { flex: 1; border: 0; }
.big { flex: none; display: flex; flex-direction: column; align-items: center; padding-top: 1px; position: relative; }
.big span { white-space: pre; margin-top: 2px; }
.big .car { margin-top: 3px; }
.big .side { position: absolute; right: 2px; bottom: 12px; }
.col { display: grid; grid-template-rows: 19px 19px 19px; }
.col button { display: flex; align-items: center; gap: 3px; }
.narrow { width: 33px; }
.narrow button { gap: 4px; }
.w-modify .body { padding-left: 2px; }
.mod0 { width: 63px; }
.mod1 { width: 76px; }
.mod0, .note, .w-block .col, .w-clip .col { margin-left: 1px; }
.mod1 .car { margin-left: 4px; }
.note .car { margin-left: 3px; }
.cap { height: 18px; display: flex; align-items: center; justify-content: center; gap: 6px; position: relative; }
.launch { position: absolute; right: 3px; bottom: 5px; border: 2px solid transparent; border-right-color: #fff; border-bottom-color: #fff; }
.tri { border: 2px solid transparent; border-right-color: #fff; border-bottom-color: #fff; }
.left { justify-content: flex-start; padding-left: 4px; }
.lay { width: 42px; }
.laycol { flex: 1; min-width: 0; }
.row { display: flex; align-items: center; }
.row button { width: 19px; justify-content: center; }
.row span { margin-left: 2px; }
.combo { display: flex; align-items: center; gap: 3px; height: 18px; box-sizing: border-box; padding: 0 3px 0 2px; background: #363d47; border: 1px solid #2b323b; }
.combo select { flex: 1; min-width: 0; }
.laycol .combo { margin: 0 2px 0 0; gap: 2px; }
.swatch { width: 12px; height: 12px; background: #fff; }
.small { width: 10px; height: 10px; margin: 0 3px; }
.blk { width: 33px; }
.w-block .body { padding-left: 2px; }
.props { flex-direction: column; }
.prow { height: 19px; display: flex; align-items: center; gap: 2px; padding-left: 1px; }
.prow .combo { flex: 1; margin-right: 2px; }
.rule { width: 50px; height: 1px; background: #cfd3d8; }
.paste { width: 44px; }
.pset { width: 60px; }
.vw { width: 68px; }
.docs { height: 22px; display: flex; align-items: center; background: #323841; }
.brg { margin: 0 13px 0 10px; }
.doc { flex: none; width: 80px; height: 17px; box-sizing: border-box; padding-left: 12px; display: flex; align-items: center; gap: 7px; background: #4d6288; color: #fff; font-size: 10px; clip-path: polygon(7px 0, 100% 0, calc(100% - 7px) 100%, 0 100%); }
.doc svg { stroke: #b9c3d2; }
.doc b { font-weight: 500; }
.plus { margin: 0 9px 0 7px; }
.slash { color: #7c838c; font-size: 12px; }
.mini { height: 26px; background: #323841; }
.minibox { width: 52px; height: 25px; box-sizing: border-box; display: flex; align-items: center; gap: 5px; padding-left: 2px; background: #444c5a; border-left: 2px solid #77818e; border-top: 1px solid #505967; }
.work { flex: 1; display: flex; min-height: 500px; }
.dock { flex: none; width: 18px; box-sizing: border-box; background: #323a44; padding: 8px 1px 8px 0; display: flex; flex-direction: column; }
.dock button { flex: 1; border: 1px solid #424b57; border-left-width: 2px; writing-mode: vertical-rl; text-orientation: sideways; display: grid; place-content: center; transform: rotate(180deg); }
.center { flex: 1; min-width: 0; display: flex; flex-direction: column; }
.canvas { flex: 1; position: relative; overflow: hidden; background: #212830; }
.sheet { position: absolute; inset: 0; width: 100%; height: 100%; }
.minor { stroke: #232b34; stroke-width: 1; }
.major { stroke: #28313c; stroke-width: 1; }
.outer { stroke: #b9bcc1; stroke-width: 1; }
.inner { stroke: #6090e0; stroke-width: 2; }
.cross { stroke: #9a9ea5; stroke-width: 1; }
.vlabel { position: absolute; left: 3px; top: 1px; font-size: 10px; }
.vwin { position: absolute; right: 5px; top: 6px; display: flex; gap: 4px; }
.compass { position: absolute; right: 22px; top: 22px; width: 100px; height: 100px; }
.compass * { stroke: none; }
.ring { fill: #3d4552; }
.compass text { fill: #858b95; font: 600 14px "Open Sans", sans-serif; text-anchor: middle; }
.compass .top { fill: #4c4e52; font-size: 8px; }
.ucs { position: absolute; left: 9px; bottom: 0; width: 80px; height: 80px; stroke: #c9cdd2; stroke-width: 1; }
.ucs text { fill: #c9cdd2; stroke: none; font: 13px "Liberation Sans", sans-serif; text-anchor: middle; }
.dyn { position: absolute; left: 853px; top: 381px; display: flex; gap: 4px; color: #33363a; white-space: nowrap; }
.dyn span, .dyn input { box-sizing: border-box; height: 15px; background: #a5a6a8; border: 1px solid #7e8186; line-height: 13px; padding-left: 3px; }
.dyn span { width: 75px; }
.dyn input { width: 46px; padding: 0; text-align: center; font-size: 10px; }
.dyn .on { background: #3494f5; color: #fff; border: 2px solid #fff; }
.layouts { height: 18px; display: flex; align-items: center; background: #323943; font-size: 10px; }
.brg2 { margin: 0 9px 0 8px; }
.model { width: 55px; height: 14px; background: #4d6288; color: #fff; font-weight: 700; clip-path: polygon(6px 0, 100% 0, calc(100% - 6px) 100%, 0 100%); }
.lt { width: 56px; margin-left: 6px; }
.sl { width: 16px; text-align: center; color: #69717c; margin-left: 2px; }
.lt:nth-of-type(4) { margin-left: 2px; }
.ad { font-size: 13px; }
.cmd { height: 106px; display: flex; background: #2b2e33; color: #b4bac2; font: 12px/13px "Liberation Sans", "Noto Sans CJK JP", sans-serif; }
.grip { width: 18px; background: #434a59; display: grid; justify-content: center; align-content: start; padding-top: 2px; }
.grip svg { stroke: #7d8593; }
.cbody { flex: 1; min-width: 0; display: flex; flex-direction: column; }
.lines { flex: 1; padding: 1px 0 0 1px; }
.lines p { margin: 0; white-space: nowrap; }
.prompt { height: 17px; display: flex; align-items: center; border-top: 1px solid #3b3f45; padding-left: 1px; white-space: pre; }
.prompt button { background: #3d434c; margin-right: 4px; }
.prompt button:nth-of-type(3) { margin-right: 0; }
.prompt em { font-style: normal; color: #4ea6ee; }
.prompt input { flex: 1; height: 13px; margin-left: 8px; padding-left: 2px; border-left: 1px solid #c9cdd2; }
.scroll { width: 9px; display: flex; flex-direction: column; align-items: center; padding: 4px 0 18px; box-sizing: border-box; background: #32373f; }
.scroll svg { stroke: #777e88; }
.scroll i { width: 7px; height: 8px; margin-top: auto; margin-bottom: 4px; background: #59616c; }
.status { height: 25px; display: flex; align-items: center; background: #313943; }
.coord { width: 188px; padding-left: 5px; }
.toggles { width: 351px; display: flex; justify-content: space-between; }
.toggles button { width: 22px; height: 22px; display: grid; place-items: center; box-sizing: border-box; border: 1px solid transparent; }
.toggles .act { background: #486583; border-color: #5b88b3; }
.sright { margin-left: auto; display: flex; align-items: center; gap: 5px; padding-right: 4px; color: #858c96; font-family: "Liberation Sans", "Noto Sans CJK JP", sans-serif; }
.sright button { display: flex; align-items: center; gap: 2px; }
.sright span { padding-top: 6px; }
.unit .car, .ratio .car { margin-left: 4px; }
.marks { position: absolute; inset: 0; width: 100%; height: 100%; pointer-events: none; }
.marks text { fill: #fff; fill-opacity: 0.08; stroke: none; font: 13px "Noto Sans CJK JP", sans-serif; font-feature-settings: normal; }
</style>
